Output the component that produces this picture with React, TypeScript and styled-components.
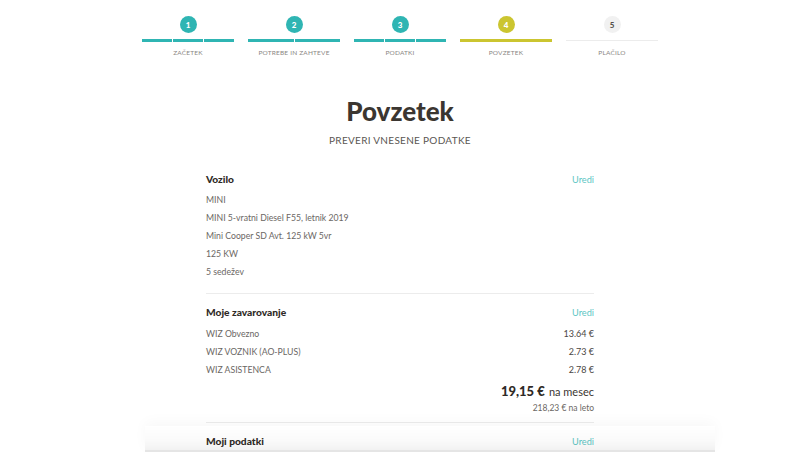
import React from 'react';
import styled, { createGlobalStyle } from 'styled-components';

const GlobalStyle = createGlobalStyle`
  html, body {
    margin: 0;
    padding: 0;
    background: #ffffff;
    font-family: Lato, 'Noto Sans', Arial, sans-serif;
    color: #3b3631;
  }
  * { box-sizing: border-box; }
`;

const TEAL = '#2fb5b3';
const LIME = '#cbc530';

type StepState = 'done' | 'active' | 'todo';

const steps: { n: number; label: string; state: StepState; segments: number }[] = [
  { n: 1, label: 'Začetek', state: 'done', segments: 3 },
  { n: 2, label: 'Potrebe in zahteve', state: 'done', segments: 2 },
  { n: 3, label: 'Podatki', state: 'done', segments: 3 },
  { n: 4, label: 'Povzetek', state: 'active', segments: 1 },
  { n: 5, label: 'Plačilo', state: 'todo', segments: 1 },
];

const Page = styled.div`
  width: 800px;
  min-height: 452px;
  overflow: hidden;
`;

const Stepper = styled.nav`
  width: 516px;
  margin: 0 auto;
  padding-top: 16px;
  display: flex;
  gap: 14px;
`;

const Step = styled.div`
  flex: 1;
  display: flex;
  flex-direction: column;
  align-items: center;
`;

const Circle = styled.div<{ $state: StepState }>`
  width: 17px;
  height: 17px;
  border-radius: 50%;
  display: flex;
  align-items: center;
  justify-content: center;
  font-size: 8px;
  font-weight: 900;
  color: ${p => (p.$state === 'todo' ? '#55504b' : '#ffffff')};
  background: ${p =>
    p.$state === 'done' ? TEAL : p.$state === 'active' ? LIME : '#f1f1f1'};
`;

const Bar = styled.div<{ $state: StepState }>`
  align-self: stretch;
  margin-top: ${p => (p.$state === 'todo' ? '7px' : '6px')};
  height: ${p => (p.$state === 'todo' ? '1px' : '3px')};
  margin-bottom: ${p => (p.$state === 'todo' ? '1px' : '0')};
  display: flex;
  gap: 1px;
`;

const Segment = styled.span<{ $state: StepState }>`
  flex: 1;
  background: ${p =>
    p.$state === 'done' ? TEAL : p.$state === 'active' ? LIME : '#ececec'};
`;

const StepLabel = styled.div`
  margin-top: 6px;
  font-size: 6.5px;
  line-height: 9px;
  letter-spacing: 0.2px;
  text-transform: uppercase;
  color: #8a8683;
`;

const Header = styled.header`
  text-align: center;
  margin-top: 40px;
`;

const Title = styled.h1`
  margin: 0;
  font-size: 26px;
  line-height: 28px;
  font-weight: 900;
  color: #3b3631;
`;

const Subtitle = styled.p`
  margin: 9px 0 0;
  font-size: 10px;
  line-height: 12px;
  letter-spacing: 0.3px;
  color: #5a5652;
`;

const Summary = styled.main`
  width: 388px;
  margin: 27px auto 0;
`;

const Section = styled.section<{ $first?: boolean }>`
  border-top: ${p => (p.$first ? 'none' : '1px solid #ececec')};
  padding-top: ${p => (p.$first ? '0' : '12px')};
  padding-bottom: ${p => (p.$first ? '13px' : '9px')};
`;

const SectionHead = styled.div`
  display: flex;
  justify-content: space-between;
  align-items: center;
  height: 12px;
`;

const SectionTitle = styled.h2`
  margin: 0;
  font-size: 10.2px;
  font-weight: 900;
  color: #2f2a26;
`;

const EditLink = styled.a`
  font-size: 9.2px;
  color: #5cc6c4;
  text-decoration: none;
  cursor: pointer;
`;

const Lines = styled.div<{ $gap: number }>`
  margin-top: ${p => p.$gap}px;
`;

const Row = styled.div`
  display: flex;
  justify-content: space-between;
  align-items: center;
  height: 18px;
  font-size: 8.7px;
  color: #6b6764;
`;

const Amount = styled.span`
  color: #4a4643;
  font-size: 9px;
`;

const Total = styled.div`
  margin-top: 4px;
  text-align: right;
  line-height: 16px;
`;

const TotalValue = styled.span`
  font-size: 13px;
  font-weight: 900;
  color: #2f2a26;
`;

const TotalUnit = styled.span`
  font-size: 11px;
  color: #3b3631;
`;

const Yearly = styled.div`
  margin-top: 3px;
  text-align: right;
  font-size: 8.5px;
  line-height: 10px;
  color: #6b6764;
`;

const BottomShade = styled.div`
  position: fixed;
  left: 145px;
  width: 570px;
  bottom: 0;
  height: 26px;
  pointer-events: none;
  background: linear-gradient(
    to bottom,
    rgba(0, 0, 0, 0) 0%,
    rgba(0, 0, 0, 0.02) 60%,
    rgba(0, 0, 0, 0.05) 100%
  );
  border-bottom: 2px solid rgba(0, 0, 0, 0.1);
  box-shadow: 0 -4px 14px rgba(0, 0, 0, 0.03);
`;

const vehicle = [
  'MINI',
  'MINI 5-vratni Diesel F55, letnik 2019',
  'Mini Cooper SD Avt. 125 kW 5vr',
  '125 KW',
  '5 sedežev',
];

const insurance = [
  { name: 'WIZ Obvezno', price: '13.64 €' },
  { name: 'WIZ VOZNIK (AO-PLUS)', price: '2.73 €' },
  { name: 'WIZ ASISTENCA', price: '2.78 €' },
];

export default function App() {
  return (
    <Page>
      <GlobalStyle />
      <Stepper>
        {steps.map(s => (
          <Step key={s.n}>
            <Circle $state={s.state}>{s.n}</Circle>
            <Bar $state={s.state}>
              {Array.from({ length: s.segments }).map((_, i) => (
                <Segment key={i} $state={s.state} />
              ))}
            </Bar>
            <StepLabel>{s.label}</StepLabel>
          </Step>
        ))}
      </Stepper>

      <Header>
        <Title>Povzetek</Title>
        <Subtitle>PREVERI VNESENE PODATKE</Subtitle>
      </Header>

      <Summary>
        <Section $first>
          <SectionHead>
            <SectionTitle>Vozilo</SectionTitle>
            <EditLink>Uredi</EditLink>
          </SectionHead>
          <Lines $gap={5}>
            {vehicle.map(v => (
              <Row key={v}>{v}</Row>
            ))}
          </Lines>
        </Section>

        <Section>
          <SectionHead>
            <SectionTitle>Moje zavarovanje</SectionTitle>
            <EditLink>Uredi</EditLink>
          </SectionHead>
          <Lines $gap={6}>
            {insurance.map(i => (
              <Row key={i.name}>
                <span>{i.name}</span>
                <Amount>{i.price}</Amount>
              </Row>
            ))}
          </Lines>
          <Total>
            <TotalValue>19,15 €</TotalValue> <TotalUnit>na mesec</TotalUnit>
          </Total>
          <Yearly>218,23 € na leto</Yearly>
        </Section>

        <Section>
          <SectionHead>
            <SectionTitle>Moji podatki</SectionTitle>
            <EditLink>Uredi</EditLink>
          </SectionHead>
        </Section>
      </Summary>
      <BottomShade />
    </Page>
  );
}
